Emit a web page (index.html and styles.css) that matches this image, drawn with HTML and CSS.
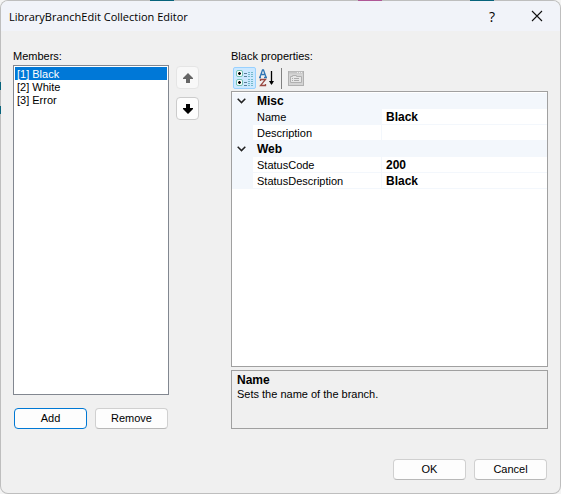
FILE: index.html
```html
<!DOCTYPE html>
<html lang="en">
<head>
    <meta charset="UTF-8">
    <meta name="viewport" content="width=device-width, initial-scale=1.0">
    <title>LibraryBranchEdit Collection Editor</title>
    <link rel="stylesheet" href="styles.css">
</head>
<body>

    <div class="dialog">
        <!-- Title Bar -->
        <header class="title-bar">
            <h1>LibraryBranchEdit Collection Editor</h1>
            <button class="title-btn help" aria-label="Help">?</button>
            <button class="title-btn" aria-label="Close">
                <svg width="12" height="12" viewBox="0 0 12 12"><path d="M1 1l10 10M11 1L1 11" stroke="#111" stroke-width="1.1" fill="none"/></svg>
            </button>
        </header>

        <div class="content">
            <!-- Members -->
            <section class="members">
                <label class="caption" for="members">Members:</label>
                <select class="list" id="members" size="20">
                    <option selected>[1] Black</option>
                    <option>[2] White</option>
                    <option>[3] Error</option>
                </select>
                <div class="list-buttons">
                    <button class="btn default">Add</button>
                    <button class="btn">Remove</button>
                </div>
            </section>

            <!-- Move Buttons -->
            <div class="move-buttons">
                <button class="move-btn" aria-label="Move up" disabled>
                    <svg width="12" height="12" viewBox="0 0 12 12"><path d="M6 1l5 5v1H8v4H4V7H1V6z" fill="#666"/></svg>
                </button>
                <button class="move-btn" aria-label="Move down">
                    <svg width="12" height="12" viewBox="0 0 12 12"><path d="M6 11l5-5V5H8V1H4v4H1v1z" fill="#000"/></svg>
                </button>
            </div>

            <!-- Properties -->
            <section class="properties">
                <h2 class="caption">Black properties:</h2>
                <div class="toolbar">
                    <button class="tool-btn active" aria-label="Categorized">
                        <svg width="19" height="18" viewBox="0 0 19 18">
                            <rect x="1.5" y="1.5" width="6" height="6" rx="1.5" fill="#fff" stroke="#74c4b4"/>
                            <rect x="1.5" y="10.5" width="6" height="6" rx="1.5" fill="#fff" stroke="#74c4b4"/>
                            <path d="M3 4.5h3M4.5 3v3M3 13.5h3M4.5 12v3" stroke="#000" stroke-width="1.3"/>
                            <path d="M9 4.5h3M9 7.5h3M9 13.5h3M9 16.5h3" stroke="#5b7e97"/>
                            <path d="M13 3.5h5M13 5.5h5M13 7.5h5M13 10.5h5M13 12.5h5M13 14.5h5M13 16.5h5" stroke="#74b9c9" stroke-dasharray="2 1"/>
                        </svg>
                    </button>
                    <button class="tool-btn" aria-label="Alphabetical">
                        <svg width="18" height="18" viewBox="0 0 18 18">
                            <path d="M1 8l2.5-7h1L7 8M2 5.5h4M0 8.500h2M5 8.500h3" stroke="#3076b5" stroke-width="1.3" fill="none"/>
                            <path d="M1.5 12v-1.500h5L1.5 16.500h5V15" stroke="#9b4a43" stroke-width="1.3" fill="none"/>
                            <path d="M12.5 2v13" stroke="#000" stroke-width="1.3"/>
                            <path d="M10 12h5l-2.5 4z" fill="#000"/>
                        </svg>
                    </button>
                    <span class="separator"></span>
                    <button class="tool-btn" aria-label="Property Pages" disabled>
                        <svg width="17" height="18" viewBox="0 0 17 18">
                            <rect x=".5" y="2.5" width="15" height="14" fill="#d4d4d4" stroke="#b0b0b0"/>
                            <path d="M1 3.5h14" stroke="#c4c4c4" stroke-width="2"/>
                            <path d="M9 3.5h1M11 3.5h1M13 3.5h1" stroke="#eee"/>
                            <path d="M2.5 7.5h2v-1h4v1h5v6h-11z" fill="#e6e6e6" stroke="#b0b0b0"/>
                            <path d="M4 9.5h1M6 9.5h5M4 11.5h1M6 11.5h5" stroke="#aaa"/>
                        </svg>
                    </button>
                </div>

                <div class="grid">
                    <table>
                        <colgroup><col class="gutter"><col class="names"><col></colgroup>
                        <tr class="category">
                            <td><svg width="9" height="6" viewBox="0 0 9 6"><path d="M.7 .8L4.5 4.6 8.3 .8" stroke="#222" stroke-width="1.5" fill="none"/></svg></td>
                            <th colspan="2">Misc</th>
                        </tr>
                        <tr class="selected"><td></td><th>Name</th><td>Black</td></tr>
                        <tr><td></td><th>Description</th><td></td></tr>
                        <tr class="category">
                            <td><svg width="9" height="6" viewBox="0 0 9 6"><path d="M.7 .8L4.5 4.6 8.3 .8" stroke="#222" stroke-width="1.5" fill="none"/></svg></td>
                            <th colspan="2">Web</th>
                        </tr>
                        <tr><td></td><th>StatusCode</th><td>200</td></tr>
                        <tr><td></td><th>StatusDescription</th><td>Black</td></tr>
                    </table>
                </div>

                <div class="description">
                    <h3>Name</h3>
                    <p>Sets the name of the branch.</p>
                </div>
            </section>
        </div>

        <footer class="footer">
            <button class="btn">OK</button>
            <button class="btn">Cancel</button>
        </footer>
    </div>

</body>
</html>
```
FILE: styles.css
```css
* {
    box-sizing: border-box;
}
html {
    background:
        linear-gradient(#0a7f9e, #0a7f9e) 150px 0 / 24px 1px no-repeat,
        linear-gradient(#e070c0, #e070c0) 358px 0 / 24px 1px no-repeat,
        linear-gradient(#0a7f9e, #0a7f9e) 470px 0 / 24px 1px no-repeat,
        linear-gradient(#0a7f9e, #0a7f9e) 0 82px / 1px 8px no-repeat,
        linear-gradient(#0a7f9e, #0a7f9e) 0 106px / 1px 8px no-repeat,
        #f4f4f4;
}
body {
    margin: 0;
    font-family: "Liberation Sans", Arial, sans-serif;
    font-size: 11px;
    line-height: 13px;
    color: #000;
}
h1, h2, h3, p {
    margin: 0;
    font-size: inherit;
    font-weight: normal;
}
button {
    font: inherit;
    color: inherit;
    padding: 0;
}
svg {
    display: block;
}
.dialog {
    display: flex;
    flex-direction: column;
    min-height: 100vh;
    border: 1px solid rgba(0, 0, 0, 0.22);
    border-radius: 8px;
    background: #f0f0f0;
    background-clip: padding-box;
    overflow: hidden;
}
.title-bar {
    display: flex;
    align-items: center;
    height: 30px;
    background: #f1f3f9;
}
.title-bar h1 {
    flex: 1;
    padding-left: 8px;
    font-family: "Open Sans", "Noto Sans", sans-serif;
    font-size: 11px;
}
.title-btn {
    display: flex;
    align-items: center;
    justify-content: center;
    width: 46px;
    height: 30px;
    border: none;
    background: none;
}
.title-btn.help {
    width: 44px;
    font-family: "Open Sans", "Noto Sans", sans-serif;
    font-size: 14px;
}
.content {
    display: flex;
    flex: 1;
    padding: 18px 12px 0;
}
.caption {
    display: block;
    height: 16px;
    line-height: 15px;
}
.members {
    display: flex;
    flex-direction: column;
    width: 156px;
}
.list {
    flex: 1;
    width: 100%;
    padding: 1px;
    border: 1px solid #828790;
    border-radius: 0;
    background: #fff;
    font: inherit;
    outline: none;
    overflow: hidden;
}
.list option {
    height: 13px;
    min-height: 13px;
    padding: 1px 2px 0;
}
.list option:checked {
    background: linear-gradient(#0078d7, #0078d7);
    -webkit-text-fill-color: #fff;
}
.list-buttons {
    display: flex;
    gap: 8px;
    padding: 13px 1px 0;
}
.btn {
    width: 73px;
    height: 21px;
    border: 1px solid #d0d0d0;
    border-bottom-color: #b8b8b8;
    border-radius: 4px;
    background: #fdfdfd;
}
.btn.default {
    border-color: #0078d4;
}
.move-buttons {
    display: flex;
    flex-direction: column;
    gap: 8px;
    padding: 17px 32px 0 7px;
}
.move-btn {
    display: flex;
    align-items: center;
    justify-content: center;
    width: 23px;
    height: 23px;
    border: 1px solid #ccc;
    border-radius: 4px;
    background: #fdfdfd;
}
.move-btn:disabled {
    border-color: #e5e5e5;
    background: #f8f8f8;
}
.properties {
    display: flex;
    flex: 1;
    flex-direction: column;
}
.toolbar {
    display: flex;
    align-items: center;
    height: 26px;
    padding: 1px 2px;
}
.tool-btn {
    display: flex;
    align-items: center;
    justify-content: center;
    width: 23px;
    height: 22px;
    border: 1px solid transparent;
    border-radius: 2px;
    background: none;
}
.tool-btn.active {
    border-color: #99d1ff;
    background: #cce8ff;
}
.separator {
    width: 1px;
    height: 21px;
    margin: 0 3px 0 2px;
    background: #808080;
}
.grid {
    flex: 1;
    padding-top: 1px;
    border: 1px solid #a0a0a0;
    background: #fff;
}
.grid table {
    width: 100%;
    table-layout: fixed;
    border-spacing: 0;
}
.gutter {
    width: 21px;
}
.names {
    width: 128px;
}
.grid td, .grid th {
    height: 16px;
    padding: 1px 4px 0;
    border-bottom: 1px solid #f3f7fc;
    line-height: 14px;
    text-align: left;
    font-weight: normal;
}
.grid td:first-child, .grid .category, .grid .selected th {
    background: #f3f7fc;
}
.grid td:first-child {
    padding: 1px 0 0 5px;
}
.grid td:last-child {
    border-left: 1px solid #f3f7fc;
    font-size: 12px;
    font-weight: bold;
}
.grid .category th {
    font-size: 12px;
    font-weight: bold;
}
.description {
    height: 59px;
    margin-top: 3px;
    padding: 2px 5px;
    border: 1px solid #a0a0a0;
}
.description h3 {
    font-size: 12px;
    font-weight: bold;
    line-height: 15px;
}
.footer {
    display: flex;
    justify-content: flex-end;
    gap: 8px;
    padding: 30px 13px 13px;
}
```
